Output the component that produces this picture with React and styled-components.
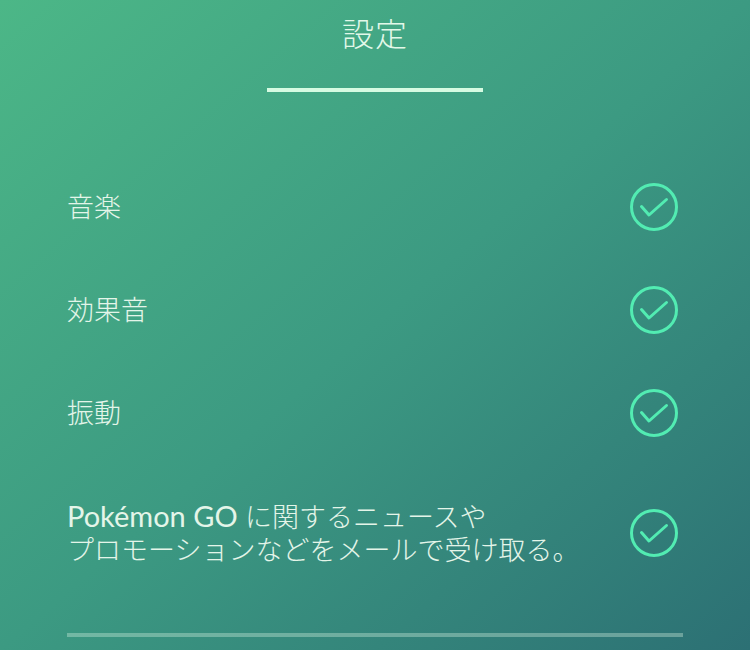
import React from "react";
import styled, { createGlobalStyle } from "styled-components";

const Global = createGlobalStyle`
  html, body { margin: 0; padding: 0; }
  body {
    font-family: Lato, "Noto Sans CJK JP", sans-serif;
  }
`;

const Page = styled.div`
  width: 750px;
  height: 650px;
  overflow: hidden;
  background: linear-gradient(to bottom right, #4cb787 0%, #3c9a82 50%, #2c7074 100%);
  display: flex;
  flex-direction: column;
  align-items: center;
  box-sizing: border-box;
`;

const Title = styled.h1`
  margin: 12px 0 0;
  font-family: "Noto Sans CJK JP", sans-serif;
  font-weight: 300;
  font-size: 32px;
  line-height: 40px;
  color: #e2f8e9;
  letter-spacing: 1px;
`;

const Underline = styled.div`
  margin-top: 36px;
  width: 216px;
  height: 4px;
  background: #d6fbe2;
`;

const List = styled.ul`
  list-style: none;
  margin: 63px 0 0;
  padding: 0;
  width: 616px;
`;

const Row = styled.li`
  display: flex;
  align-items: center;
  justify-content: space-between;
`;

const Label = styled.span`
  padding: 35px 0;
  font-family: Lato, "Noto Sans CJK JP", sans-serif;
  font-weight: 300;
  font-size: 27px;
  line-height: 33px;
  color: #e4f5e9;
  white-space: nowrap;
`;

const Latin = styled.span`
  font-family: Lato, sans-serif;
  font-weight: 400;
  font-size: 29px;
`;

const CheckWrap = styled.span`
  display: flex;
  width: 48px;
  height: 48px;
  margin-right: 5px;
  flex-shrink: 0;
`;

const Divider = styled.div`
  margin-top: 32px;
  width: 616px;
  height: 4px;
  background: rgba(220, 245, 230, 0.35);
`;

const Check = () => (
  <CheckWrap>
    <svg width="48" height="48" viewBox="0 0 48 48" fill="none">
      <circle cx="24" cy="24" r="22.5" stroke="#52ecb2" strokeWidth="3" />
      <path
        d="M11.5 23.5 L19 32 L36.5 16.5"
        stroke="#52ecb2"
        strokeWidth="3"
        strokeLinecap="round"
        strokeLinejoin="round"
      />
    </svg>
  </CheckWrap>
);

export default function App() {
  return (
    <>
      <Global />
      <Page>
        <Title>設定</Title>
        <Underline />
        <List>
          <Row>
            <Label>音楽</Label>
            <Check />
          </Row>
          <Row>
            <Label>効果音</Label>
            <Check />
          </Row>
          <Row>
            <Label>振動</Label>
            <Check />
          </Row>
          <Row>
            <Label>
              <Latin>Pokémon GO</Latin> に関するニュースや
              <br />
              プロモーションなどをメールで受け取る。
            </Label>
            <Check />
          </Row>
        </List>
        <Divider />
      </Page>
    </>
  );
}
